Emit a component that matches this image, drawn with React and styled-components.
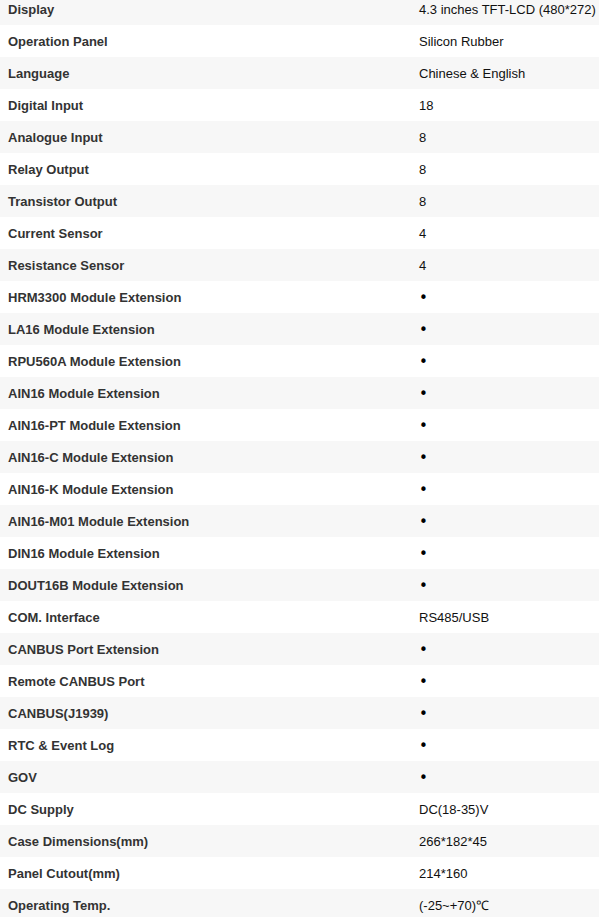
import React from "react";
import styled, { createGlobalStyle } from "styled-components";

const GlobalStyle = createGlobalStyle`
    html, body {
        margin: 0;
        padding: 0;
        background: #fff;
        overflow: hidden;
    }
    body {
        font-family: "Liberation Sans", Arial, sans-serif;
    }
`

// lista de especificações do controlador (null = suportado, mostra o ponto)
const specs = [
    ["Display", "4.3 inches TFT-LCD (480*272)"],
    ["Operation Panel", "Silicon Rubber"],
    ["Language", "Chinese & English"],
    ["Digital Input", "18"],
    ["Analogue Input", "8"],
    ["Relay Output", "8"],
    ["Transistor Output", "8"],
    ["Current Sensor", "4"],
    ["Resistance Sensor", "4"],
    ["HRM3300 Module Extension", null],
    ["LA16 Module Extension", null],
    ["RPU560A Module Extension", null],
    ["AIN16 Module Extension", null],
    ["AIN16-PT Module Extension", null],
    ["AIN16-C Module Extension", null],
    ["AIN16-K Module Extension", null],
    ["AIN16-M01 Module Extension", null],
    ["DIN16 Module Extension", null],
    ["DOUT16B Module Extension", null],
    ["COM. Interface", "RS485/USB"],
    ["CANBUS Port Extension", null],
    ["Remote CANBUS Port", null],
    ["CANBUS(J1939)", null],
    ["RTC & Event Log", null],
    ["GOV", null],
    ["DC Supply", "DC(18-35)V"],
    ["Case Dimensions(mm)", "266*182*45"],
    ["Panel Cutout(mm)", "214*160"],
    ["Operating Temp.", "(-25~+70)℃"],
]

const Table = styled.table`
    width: 599px;
    margin-top: -7px;
    border-collapse: collapse;
    table-layout: fixed;
    font-size: 13px;
`

const Row = styled.tr`
    height: 32px;
    background: ${(props) => (props.$striped ? "#f7f7f7" : "#ffffff")};
`

const Label = styled.td`
    width: 395px;
    padding: 0 8px;
    font-weight: bold;
    color: #333;
    white-space: nowrap;
    vertical-align: middle;
`

const Value = styled.td`
    padding: 0 8px;
    color: #111;
    white-space: nowrap;
    vertical-align: middle;
`

const Dot = styled.span`
    font-family: "DejaVu Sans", sans-serif;
    font-size: 15px;
    line-height: 1;
    vertical-align: -2px;
    color: #000;
`

const App = () => {
    return (
        <>
            <GlobalStyle />
            <Table>
                <tbody>
                    {specs.map(([label, value], i) => (
                        <Row key={label} $striped={i % 2 === 0}>
                            <Label>{label}</Label>
                            <Value>{value === null ? <Dot>•</Dot> : value}</Value>
                        </Row>
                    ))}
                </tbody>
            </Table>
        </>
    )
}

export default App
